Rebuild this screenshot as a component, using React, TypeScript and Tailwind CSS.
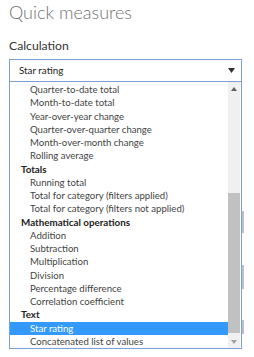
import React from "react";

type Row = { label: string; kind: "header" | "item"; selected?: boolean };

const rows: Row[] = [
  { label: "Quarter-to-date total", kind: "item" },
  { label: "Month-to-date total", kind: "item" },
  { label: "Year-over-year change", kind: "item" },
  { label: "Quarter-over-quarter change", kind: "item" },
  { label: "Month-over-month change", kind: "item" },
  { label: "Rolling average", kind: "item" },
  { label: "Totals", kind: "header" },
  { label: "Running total", kind: "item" },
  { label: "Total for category (filters applied)", kind: "item" },
  { label: "Total for category (filters not applied)", kind: "item" },
  { label: "Mathematical operations", kind: "header" },
  { label: "Addition", kind: "item" },
  { label: "Subtraction", kind: "item" },
  { label: "Multiplication", kind: "item" },
  { label: "Division", kind: "item" },
  { label: "Percentage difference", kind: "item" },
  { label: "Correlation coefficient", kind: "item" },
  { label: "Text", kind: "header" },
  { label: "Star rating", kind: "item", selected: true },
  { label: "Concatenated list of values", kind: "item" },
];

export default function App() {
  return (
    <div
      className="w-[254px] h-[357px] bg-white overflow-hidden relative"
      style={{ fontFamily: '"Segoe UI", Lato, "Open Sans", sans-serif' }}
    >
      {/* background peeking elements */}
      <div className="absolute left-[242px] top-[211px] w-[2px] h-[22px] bg-[#b8c0cc]" />
      <div className="absolute left-[242px] top-[265px] w-[2px] h-[24px] bg-[#b8c0cc]" />
      <div className="absolute left-[242px] top-[320px] w-[2px] h-[14px] bg-[#b8c0cc]" />

      <div className="pl-[9px] pt-[1px]">
        <div className="text-[18px] font-light text-[#707070] leading-[22px]">
          Quick measures
        </div>
        <div className="mt-[14px] text-[12.2px] text-[#333] leading-[17px]">Calculation</div>
        <div className="mt-[5px] w-[233px]">
          <div className="h-[23px] border border-[#7d9fd6] flex items-center justify-between pl-[9px] pr-[6px] text-[9.8px] text-[#222]">
            <span>Star rating</span>
            <svg width="7" height="5" viewBox="0 0 7 5">
              <path d="M0 0 L7 0 L3.5 5 Z" fill="#333" />
            </svg>
          </div>
          <div className="border border-t-0 border-[#7d9fd6] flex h-[267px]">
            <div className="flex-1 flex flex-col pt-[1px]">
              {rows.map((r) => (
                <div
                  key={r.label}
                  className={
                    r.kind === "header"
                      ? "h-[13.25px] leading-[13.25px] pl-[11px] text-[9.8px] font-bold text-[#222] whitespace-nowrap"
                      : r.selected
                      ? "h-[13.25px] leading-[13.25px] pl-[20px] text-[9.6px] text-white bg-[#3399fa] whitespace-nowrap"
                      : "h-[13.25px] leading-[13.25px] pl-[20px] text-[9.6px] text-[#444] whitespace-nowrap"
                  }
                >
                  {r.label}
                </div>
              ))}
            </div>
            <div className="w-[12px] bg-[#f0f0f0] flex flex-col items-center mr-[1px]">
              <div className="h-[13px] w-full flex items-center justify-center">
                <svg width="6" height="4" viewBox="0 0 6 4">
                  <path d="M0 4 L6 4 L3 0 Z" fill="#606060" />
                </svg>
              </div>
              <div className="flex-1 w-full flex flex-col">
                <div className="h-[98px]" />
                <div className="flex-1 bg-[#c1c1c1] mb-[2px]" />
              </div>
              <div className="h-[13px] w-full flex items-center justify-center">
                <svg width="6" height="4" viewBox="0 0 6 4">
                  <path d="M0 0 L6 0 L3 4 Z" fill="#a0a0a0" />
                </svg>
              </div>
            </div>
          </div>
        </div>
      </div>
    </div>
  );
}
